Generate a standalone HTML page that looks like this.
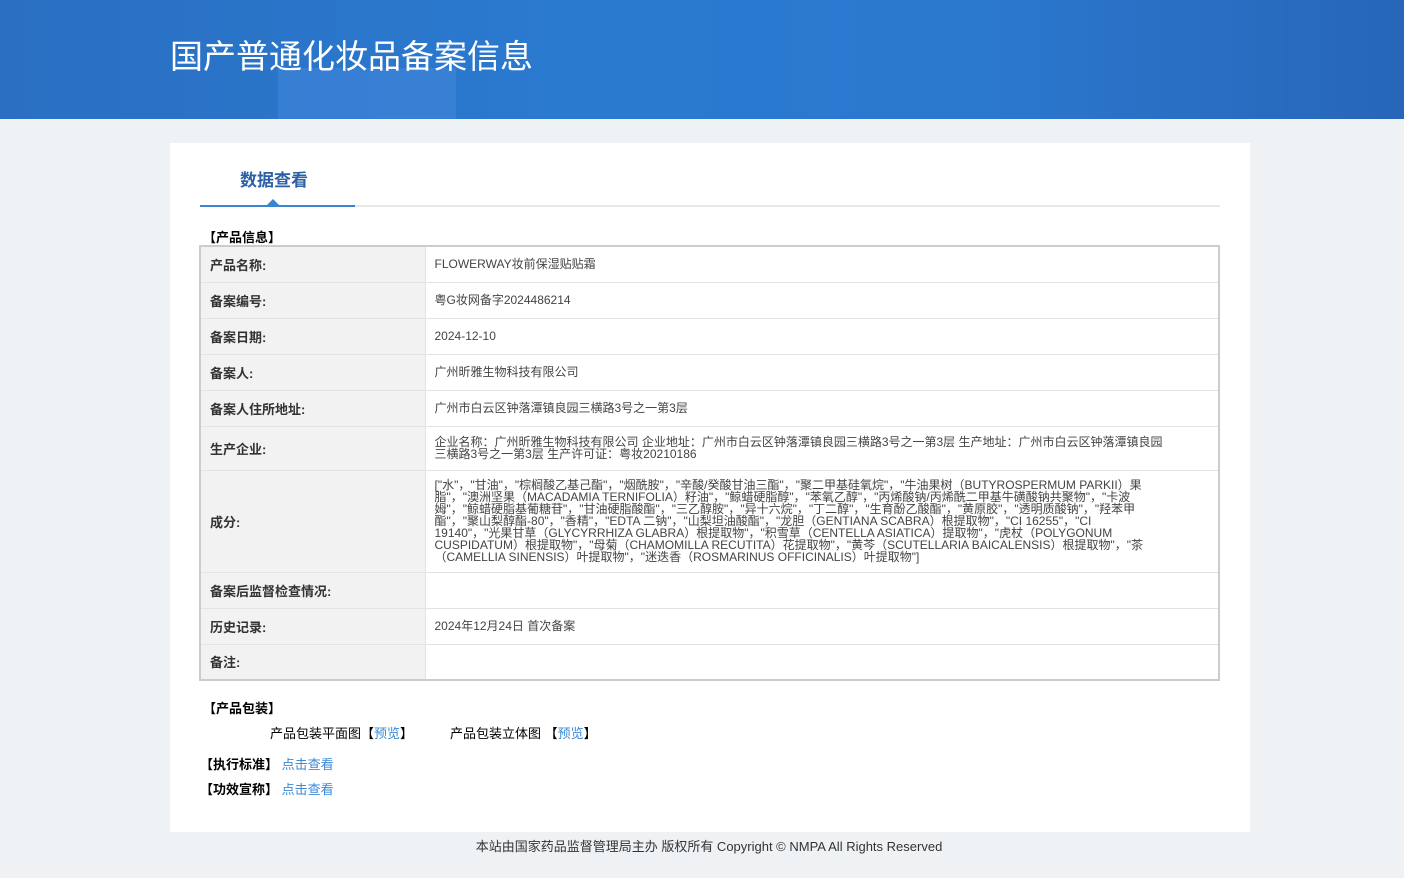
<!DOCTYPE html>
<html><head><meta charset="utf-8"><style>
*{margin:0;padding:0;box-sizing:border-box}
body{width:1404px;height:878px;background:#eff2f5;font-family:"Liberation Sans","Noto Sans CJK SC",sans-serif;color:#333;position:relative;overflow:hidden}
.hd{position:absolute;left:0;top:0;width:1404px;height:119px;background:linear-gradient(90deg,#2a6fc2 0%,#2a7ad0 40%,#2b78cf 70%,#2766b8 100%)}
.hd .blk{position:absolute;left:278px;top:68px;width:178px;height:51px;background:#3b82d6;opacity:.8}
.hd h1{position:absolute;left:170px;top:30px;font-size:33px;font-weight:normal;color:#fff;font-family:"Liberation Sans","Noto Sans CJK SC",sans-serif}
.card{position:absolute;left:170px;top:143px;width:1080px;height:689px;background:#fff}
.tab{position:absolute;left:70px;top:23px;font-size:17px;font-weight:bold;color:#2b5fa6}
.tl{position:absolute;left:30px;top:62px;width:1020px;height:2px;background:#e8e8e8}
.tb{position:absolute;left:30px;top:62px;width:155px;height:2px;background:#3a85d0}
.tri{position:absolute;left:97px;top:56px;border:6px solid transparent;border-bottom-color:#3a85d0;border-top:0}
.sec{position:absolute;font-size:13px;font-weight:bold;color:#000}
table{position:absolute;left:29px;top:102px;width:1021px;border-collapse:collapse;border:2px solid #ccc;font-size:12px}
td{border:1px solid #e3e3e3;padding:0 9px;height:36px;vertical-align:middle}
td.l{width:225px;background:#f2f2f2;font-weight:bold;color:#333;font-size:13px}
td.v{color:#444;line-height:12px}
.s{position:absolute;font-size:13px;color:#000}
a{color:#3a8ad8;text-decoration:none}
.ft{position:absolute;top:836px;left:0;width:1404px;text-align:center;font-size:13px;color:#333;padding-left:14px}
</style></head><body>
<div class="hd"><div class="blk"></div><h1>国产普通化妆品备案信息</h1></div>
<div class="card">
<div class="tab">数据查看</div>
<div class="tl"></div><div class="tb"></div><div class="tri"></div>
<div class="sec" style="left:33px;top:84px">【产品信息】</div>
<table>
<tr><td class="l">产品名称:</td><td class="v">FLOWERWAY妆前保湿贴贴霜</td></tr>
<tr><td class="l">备案编号:</td><td class="v">粤G妆网备字2024486214</td></tr>
<tr><td class="l">备案日期:</td><td class="v">2024-12-10</td></tr>
<tr><td class="l">备案人:</td><td class="v">广州昕雅生物科技有限公司</td></tr>
<tr><td class="l">备案人住所地址:</td><td class="v">广州市白云区钟落潭镇良园三横路3号之一第3层</td></tr>
<tr><td class="l" style="height:44px">生产企业:</td><td class="v">企业名称：广州昕雅生物科技有限公司 企业地址：广州市白云区钟落潭镇良园三横路3号之一第3层 生产地址：广州市白云区钟落潭镇良园<br>三横路3号之一第3层 生产许可证：粤妆20210186</td></tr>
<tr><td class="l" style="height:102px">成分:</td><td class="v" style="padding-right:60px">["水"，"甘油"，"棕榈酸乙基己酯"，"烟酰胺"，"辛酸/癸酸甘油三酯"，"聚二甲基硅氧烷"，"牛油果树（BUTYROSPERMUM PARKII）果脂"，"澳洲坚果（MACADAMIA TERNIFOLIA）籽油"，"鲸蜡硬脂醇"，"苯氧乙醇"，"丙烯酸钠/丙烯酰二甲基牛磺酸钠共聚物"，"卡波姆"，"鲸蜡硬脂基葡糖苷"，"甘油硬脂酸酯"，"三乙醇胺"，"异十六烷"，"丁二醇"，"生育酚乙酸酯"，"黄原胶"，"透明质酸钠"，"羟苯甲酯"，"聚山梨醇酯-80"，"香精"，"EDTA 二钠"，"山梨坦油酸酯"，"龙胆（GENTIANA SCABRA）根提取物"，"CI 16255"，"CI 19140"，"光果甘草（GLYCYRRHIZA GLABRA）根提取物"，"积雪草（CENTELLA ASIATICA）提取物"，"虎杖（POLYGONUM CUSPIDATUM）根提取物"，"母菊（CHAMOMILLA RECUTITA）花提取物"，"黄芩（SCUTELLARIA BAICALENSIS）根提取物"，"茶（CAMELLIA SINENSIS）叶提取物"，"迷迭香（ROSMARINUS OFFICINALIS）叶提取物"]</td></tr>
<tr><td class="l">备案后监督检查情况:</td><td class="v"></td></tr>
<tr><td class="l">历史记录:</td><td class="v">2024年12月24日 首次备案</td></tr>
<tr><td class="l">备注:</td><td class="v"></td></tr>
</table>
<div class="sec" style="left:33px;top:555px">【产品包装】</div>
<div class="s" style="left:100px;top:580px">产品包装平面图【<a>预览</a>】</div>
<div class="s" style="left:280px;top:580px">产品包装立体图 【<a>预览</a>】</div>
<div class="sec" style="left:30px;top:611px">【执行标准】 <a style="font-weight:normal">点击查看</a></div>
<div class="sec" style="left:30px;top:636px">【功效宣称】 <a style="font-weight:normal">点击查看</a></div>
</div>
<div class="ft">本站由国家药品监督管理局主办 版权所有 Copyright © NMPA All Rights Reserved</div>
</body></html>
